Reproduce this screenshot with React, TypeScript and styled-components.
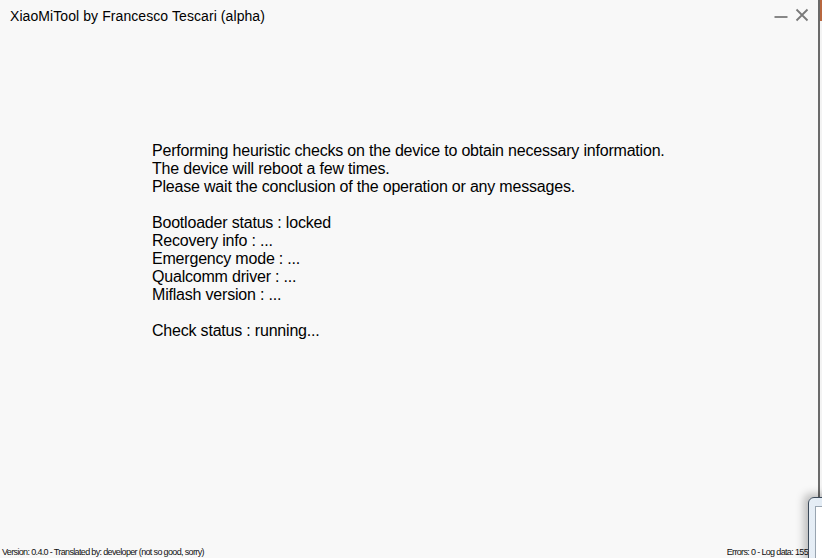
import styled, { createGlobalStyle } from 'styled-components';

const GlobalStyle = createGlobalStyle`
	html, body {
		margin: 0;
		padding: 0;
		background: #f8f8f8;
	}
	* {
		box-sizing: border-box;
	}
`;

const Desktop = styled.div`
	position: relative;
	display: flex;
	width: 822px;
	height: 558px;
	overflow: hidden;
	font-family: 'Liberation Sans', Arial, sans-serif;
	color: #000;
`;

const AppWindow = styled.div`
	display: flex;
	flex-direction: column;
	width: 820px;
	height: 100%;
	background: #f8f8f8;
	border-right: 2px solid #6a6a6a;
`;

const Edge = styled.div`
	display: flex;
	flex-direction: column;
	width: 2px;
	background: #f3f3f3;
	.top {
		height: 21px;
		background: #b8673f;
	}
`;

const TitleBar = styled.div`
	display: flex;
	align-items: center;
	justify-content: space-between;
	height: 32px;
	padding: 0 0 0 10px;
	font-size: 14px;
	letter-spacing: 0.08px;
`;

const Controls = styled.div`
	display: flex;
	align-items: center;
	gap: 7px;
	padding-right: 9px;
	margin-top: -3px;
`;

const Content = styled.div`
	flex: 1;
	padding: 110px 0 0 152px;
	font-size: 16px;
	line-height: 18px;
	letter-spacing: -0.2px;
`;

const Line = styled.div<{ $gap?: boolean }>`
	margin-top: ${({ $gap }) => ($gap ? '18px' : '0')};
	white-space: nowrap;
`;

const Footer = styled.div`
	display: flex;
	justify-content: space-between;
	align-items: flex-end;
	height: 14px;
	padding: 0 10px 1px 2px;
	font-size: 9px;
	letter-spacing: -0.65px;
	color: #111;
`;

const OtherWindow = styled.div`
	position: absolute;
	left: 808px;
	top: 497px;
	width: 80px;
	height: 100px;
	border: 1px solid #3c4a5a;
	border-radius: 6px 0 0 0;
	background: linear-gradient(90deg, #e6eef6, #d4e0ec);
	box-shadow: -4px -3px 8px rgba(0, 0, 0, 0.25);
	padding: 8px 0 0 6px;
	.inner {
		width: 100%;
		height: 100%;
		background: #fff;
		border-left: 1px solid #98a4b0;
		border-top: 1px solid #98a4b0;
	}
`;

const infoLines = [
	'Bootloader status : locked',
	'Recovery info : ...',
	'Emergency mode : ...',
	'Qualcomm driver : ...',
	'Miflash version : ...',
];

export default function App() {
	return (
		<>
			<GlobalStyle />
			<Desktop>
				<AppWindow>
					<TitleBar>
						<span>XiaoMiTool by Francesco Tescari (alpha)</span>
						<Controls>
							<svg width="14" height="14" viewBox="0 0 14 14">
								<path d="M0.5 9 H13.5" stroke="#7a7a7a" strokeWidth="1.8" />
							</svg>
							<svg width="14" height="14" viewBox="0 0 14 14">
								<path d="M1.5 1.5 L12.5 12.5 M12.5 1.5 L1.5 12.5" stroke="#7a7a7a" strokeWidth="1.8" />
							</svg>
						</Controls>
					</TitleBar>
					<Content>
						<Line>Performing heuristic checks on the device to obtain necessary information.</Line>
						<Line>The device will reboot a few times.</Line>
						<Line>Please wait the conclusion of the operation or any messages.</Line>
						{infoLines.map((text, i) => (
							<Line key={text} $gap={i === 0}>
								{text}
							</Line>
						))}
						<Line $gap>Check status : running...</Line>
					</Content>
					<Footer>
						<span>Version: 0.4.0 - Translated by: developer (not so good, sorry)</span>
						<span>Errors: 0 - Log data: 155</span>
					</Footer>
				</AppWindow>
				<Edge>
					<div className="top" />
				</Edge>
				<OtherWindow>
					<div className="inner" />
				</OtherWindow>
			</Desktop>
		</>
	);
}
